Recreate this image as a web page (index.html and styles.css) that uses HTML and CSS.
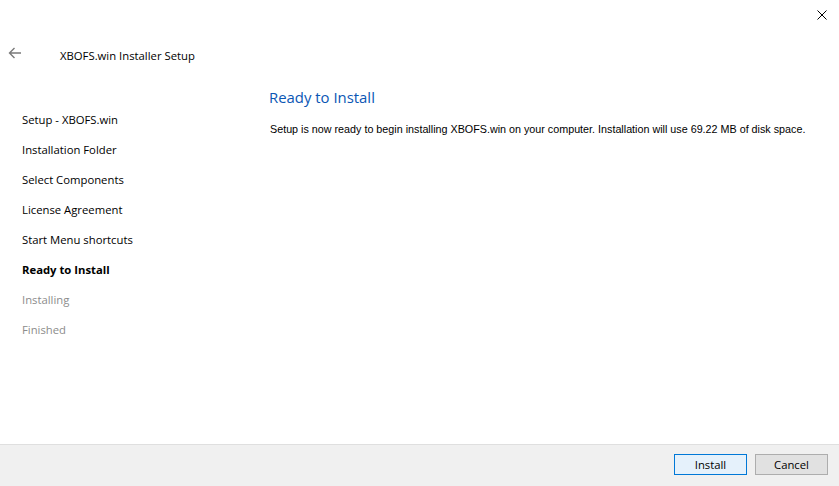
FILE: index.html
```html
<!DOCTYPE html>
<html>
<head>
<meta charset="utf-8">
<link rel="stylesheet" href="styles.css">
</head>
<body>
<div class="window">
  <div class="titlebar">
    <button class="close" aria-label="Close">
      <svg width="10" height="10" viewBox="0 0 10 10"><path d="M0.5 0.5L9.5 9.5M9.5 0.5L0.5 9.5" stroke="#000" stroke-width="1" fill="none"/></svg>
    </button>
  </div>
  <div class="header">
    <span class="back">
      <svg width="14" height="12" viewBox="0 0 14 12"><path d="M13 6H1.5M6.5 1L1.5 6L6.5 11" stroke="#7a7a7a" stroke-width="1.4" fill="none"/></svg>
    </span>
    <span class="app-title">XBOFS.win Installer Setup</span>
  </div>
  <div class="main">
    <ul class="steps">
      <li>Setup - XBOFS.win</li>
      <li>Installation Folder</li>
      <li>Select Components</li>
      <li>License Agreement</li>
      <li>Start Menu shortcuts</li>
      <li class="current">Ready to Install</li>
      <li class="future">Installing</li>
      <li class="future">Finished</li>
    </ul>
    <div class="content">
      <h1 class="page-title">Ready to Install</h1>
      <p class="page-text">Setup is now ready to begin installing XBOFS.win on your computer. Installation will use 69.22 MB of disk space.</p>
    </div>
  </div>
  <div class="footer">
    <button class="btn btn-default">Install</button>
    <button class="btn">Cancel</button>
  </div>
</div>
</body>
</html>
```
FILE: styles.css
```css
html, body {
  margin: 0;
  padding: 0;
  background: #fff;
}
body {
  font-family: "Open Sans", "Noto Sans", sans-serif;
  font-size: 11.3px;
  color: #000;
}
.window {
  width: 839px;
  height: 486px;
  display: flex;
  flex-direction: column;
}
.titlebar {
  height: 30px;
  display: flex;
  justify-content: flex-end;
  align-items: flex-start;
}
.close {
  border: 0;
  background: transparent;
  padding: 0;
  width: 46px;
  height: 29px;
  margin-right: -6px;
  display: flex;
  align-items: center;
  justify-content: center;
}
.close svg { display: block; }
.header {
  height: 50px;
  display: flex;
  align-items: center;
}
.back {
  width: 60px;
  padding-left: 8px;
  box-sizing: border-box;
  display: flex;
  align-items: center;
  margin-top: -4px;
}
.back svg { display: block; }
.app-title {
  font-size: 11.3px;
  margin-top: 1px;
}
.main {
  flex: 1;
  display: flex;
}
.steps {
  list-style: none;
  margin: 25px 0 0 0;
  padding: 0 0 0 22px;
  width: 247px;
}
.steps li {
  height: 30px;
  line-height: 30px;
  font-size: 11.3px;
  white-space: nowrap;
}
.steps li.current { font-weight: 700; }
.steps li.future { color: #8c8c8c; }
.content {
  flex: 1;
  padding-top: 6px;
}
.page-title {
  margin: 0;
  font-size: 14.9px;
  font-weight: 400;
  color: #0a56b4;
  line-height: 22px;
}
.page-text {
  margin: 14px 0 0 1px;
  font-family: "Liberation Sans", Arial, sans-serif;
  font-size: 10.75px;
  line-height: 14px;
  white-space: nowrap;
}
.footer {
  border-top: 1px solid #dfdfdf;
  background: #f0f0f0;
  display: flex;
  justify-content: flex-end;
  align-items: flex-start;
  gap: 8px;
  padding: 9px 11px 0 0;
  box-sizing: border-box;
  height: 42px;
}
.btn {
  width: 73px;
  height: 21px;
  box-sizing: border-box;
  border: 1px solid #adadad;
  background: #e1e1e1;
  font-family: "Open Sans", sans-serif;
  font-size: 11.3px;
  color: #000;
  padding: 0;
  margin: 0;
  line-height: 19px;
}
.btn-default {
  border-color: #0078d7;
  background: #e5f1fb;
}
```
